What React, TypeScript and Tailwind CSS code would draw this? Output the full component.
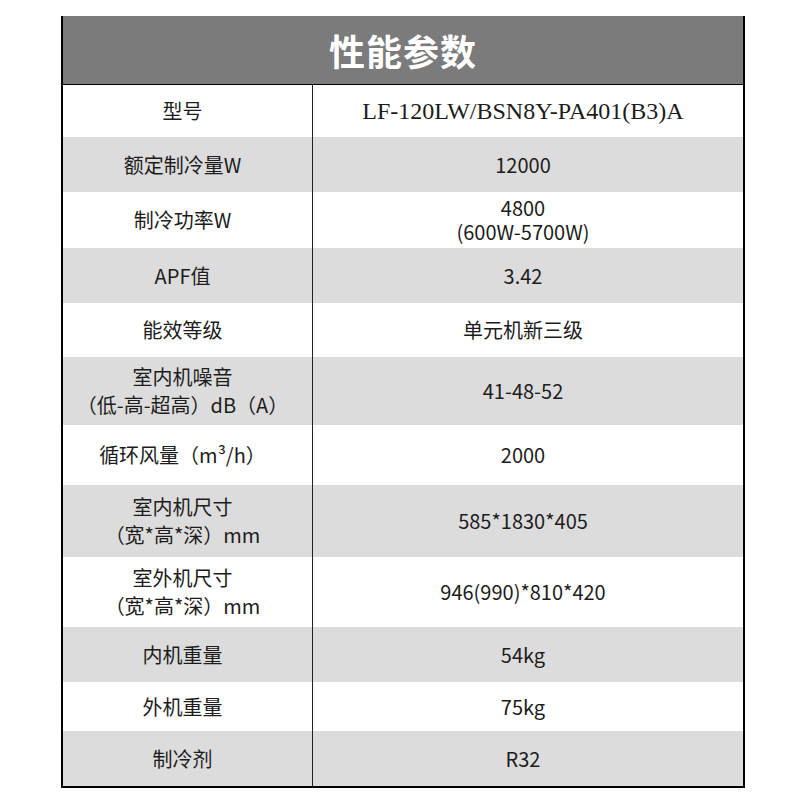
const rows: { label: string[]; value: string[]; h: string; gray: boolean; serif?: boolean }[] = [
  { label: ["型号"], value: ["LF-120LW/BSN8Y-PA401(B3)A"], h: "h-[52px]", gray: false, serif: true },
  { label: ["额定制冷量W"], value: ["12000"], h: "h-[55px]", gray: true },
  { label: ["制冷功率W"], value: ["4800", "(600W-5700W)"], h: "h-[56px]", gray: false },
  { label: ["APF值"], value: ["3.42"], h: "h-[55px]", gray: true },
  { label: ["能效等级"], value: ["单元机新三级"], h: "h-[54px]", gray: false },
  { label: ["室内机噪音", "（低-高-超高）dB（A）"], value: ["41-48-52"], h: "h-[68px]", gray: true },
  { label: ["循环风量（m³/h）"], value: ["2000"], h: "h-[60px]", gray: false },
  { label: ["室内机尺寸", "（宽*高*深）mm"], value: ["585*1830*405"], h: "h-[72px]", gray: true },
  { label: ["室外机尺寸", "（宽*高*深）mm"], value: ["946(990)*810*420"], h: "h-[70px]", gray: false },
  { label: ["内机重量"], value: ["54kg"], h: "h-[55px]", gray: true },
  { label: ["外机重量"], value: ["75kg"], h: "h-[49px]", gray: false },
  { label: ["制冷剂"], value: ["R32"], h: "h-[55px]", gray: true },
];

export default function App() {
  return (
    <div className="w-[800px] h-[800px] bg-white pt-[16px] pl-[61px] font-['Noto_Sans_CJK_SC',sans-serif] text-[#1c1c1c]">
      <div className="w-[684px] border-x-2 border-b-2 border-black">
        <div className="h-[69px] bg-[#7b7b7b] border-b border-black flex items-center justify-center">
          <span className="text-[36px] font-bold text-white leading-none tracking-[1px]">性能参数</span>
        </div>
        {rows.map((r, i) => (
          <div key={i} className={`flex ${r.h} ${r.gray ? "bg-[#dcdcdc]" : "bg-white"}`}>
            <div className="w-[250px] border-r border-[#222] flex flex-col items-center justify-center pr-[10px] text-[20px] leading-[28px]">
              {r.label.map((t, j) => (
                <div key={j}>{t}</div>
              ))}
            </div>
            <div
              className={`flex-1 flex flex-col items-center justify-center pr-[10px] ${
                r.serif ? "font-['Liberation_Serif',serif] text-[24px] leading-[28px]" : "text-[20px] leading-[24px]"
              }`}
            >
              {r.value.map((t, j) => (
                <div key={j}>{t}</div>
              ))}
            </div>
          </div>
        ))}
      </div>
    </div>
  );
}
